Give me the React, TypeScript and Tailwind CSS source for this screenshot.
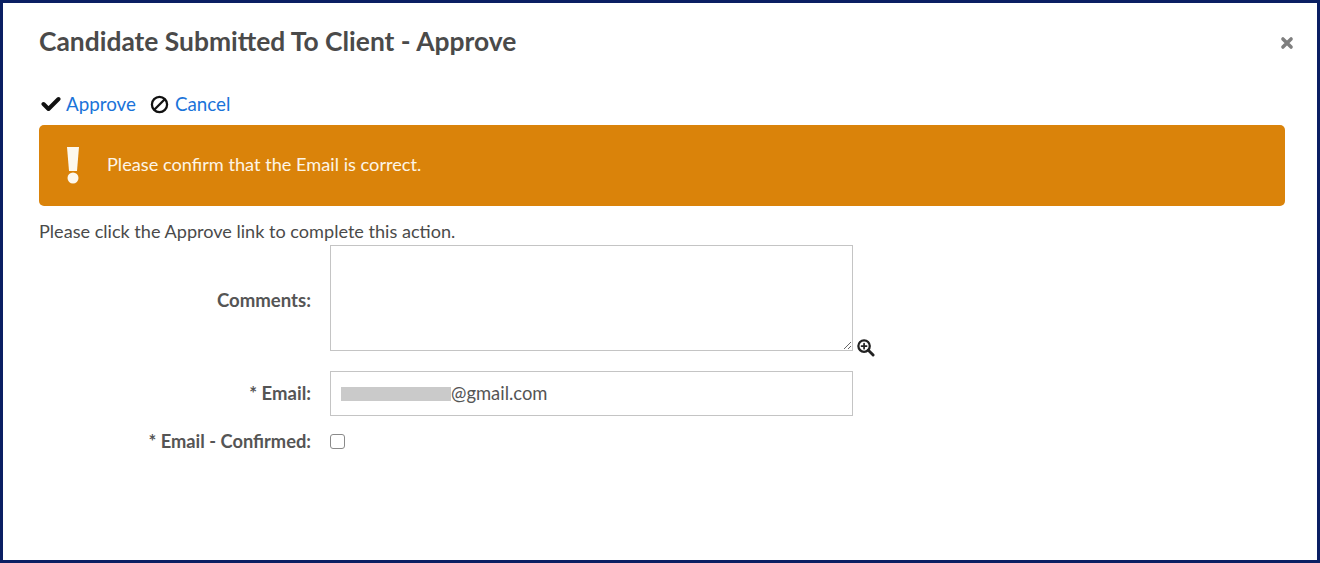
export default function App() {
  return (
    <div className="relative h-[563px] w-[1320px] overflow-hidden border-[3px] border-[#0a1f63] bg-white text-[#4a4a4a]" style={{ fontFamily: "Lato, 'Open Sans', sans-serif" }}>
      <div className="flex flex-col pl-[36px] pr-[32px]">
        <div className="flex items-start justify-between pt-[20px]">
          <h1 className="text-[26.4px] leading-[36px] font-bold text-[#4a4a4a]">Candidate Submitted To Client - Approve</h1>
          <svg viewBox="0 0 12 12" className="mt-[13px] mr-[-9px] h-[14px] w-[14px]" fill="none" stroke="#7f7f7f" strokeWidth="3" strokeLinecap="round">
            <path d="M2.5 2.5 L9.5 9.5 M9.5 2.5 L2.5 9.5" />
          </svg>
        </div>

        <div className="mt-[32px] flex h-[26px] items-center text-[18.8px] text-[#1a73d9]">
          <svg viewBox="0 0 20 16" className="ml-[2px] h-[16px] w-[20px]" fill="none" stroke="#111" strokeWidth="4" strokeLinecap="round" strokeLinejoin="round">
            <path d="M2.5 8 L7.5 13 L17.5 3" />
          </svg>
          <a className="ml-[5px]">Approve</a>
          <svg viewBox="0 0 20 20" className="ml-[14px] h-[19px] w-[19px]" fill="none" stroke="#111" strokeWidth="2.4">
            <circle cx="10" cy="10" r="8" />
            <path d="M4.5 15.5 L15.5 4.5" />
          </svg>
          <a className="ml-[6px]">Cancel</a>
        </div>

        <div className="mt-[8px] flex h-[81px] w-[1246px] items-center rounded-[5px] bg-[#da830a] pb-[2px] text-[18.2px] text-[#fdf5e6]">
          <svg viewBox="0 0 14 38" className="ml-[27px] h-[38px] w-[14px]" fill="#fdf8ee">
            <path d="M1 1 H13 L11 25 H3 Z" />
            <circle cx="7" cy="32" r="5.5" />
          </svg>
          <span className="ml-[27px]">Please confirm that the Email is correct.</span>
        </div>

        <p className="mt-[12px] text-[18.1px] leading-[26px]">Please click the Approve link to complete this action.</p>

        <div className="mt-[1px] flex">
          <label className="mt-[42px] w-[272px] text-right text-[18.6px] leading-[26px] font-bold text-[#555]">Comments:</label>
          <div className="ml-[19px] h-[106px] w-[523px] border border-[#c4c4c4]">
            <textarea className="block h-full w-full resize outline-none" />
          </div>
          <svg viewBox="0 0 20 20" className="mt-[93px] ml-[3px] h-[19px] w-[19px]" fill="none" stroke="#222" strokeWidth="2.4" strokeLinecap="round">
            <circle cx="8.5" cy="8.5" r="6" />
            <path d="M13 13 L18 18" strokeWidth="3" />
            <path d="M5.8 8.5 H11.2 M8.5 5.8 V11.2" strokeWidth="1.8" />
          </svg>
        </div>

        <div className="mt-[14px] flex items-center">
          <label className="w-[272px] text-right text-[18.5px] font-bold text-[#555]">* Email:</label>
          <div className="ml-[19px] flex h-[45px] w-[523px] items-center border border-[#c4c4c4] pl-[10px] text-[18.4px] text-[#555]">
            <span className="h-[14px] w-[110px] bg-[#cacaca]" />
            <span>@gmail.com</span>
          </div>
        </div>

        <div className="mt-[14px] flex items-center">
          <label className="w-[272px] text-right text-[18.3px] leading-[22px] font-bold text-[#555]">* Email - Confirmed:</label>
          <span className="ml-[19px] h-[15px] w-[15px] rounded-[3px] border border-[#8a8a8a] bg-white" />
        </div>
      </div>
    </div>
  );
}
